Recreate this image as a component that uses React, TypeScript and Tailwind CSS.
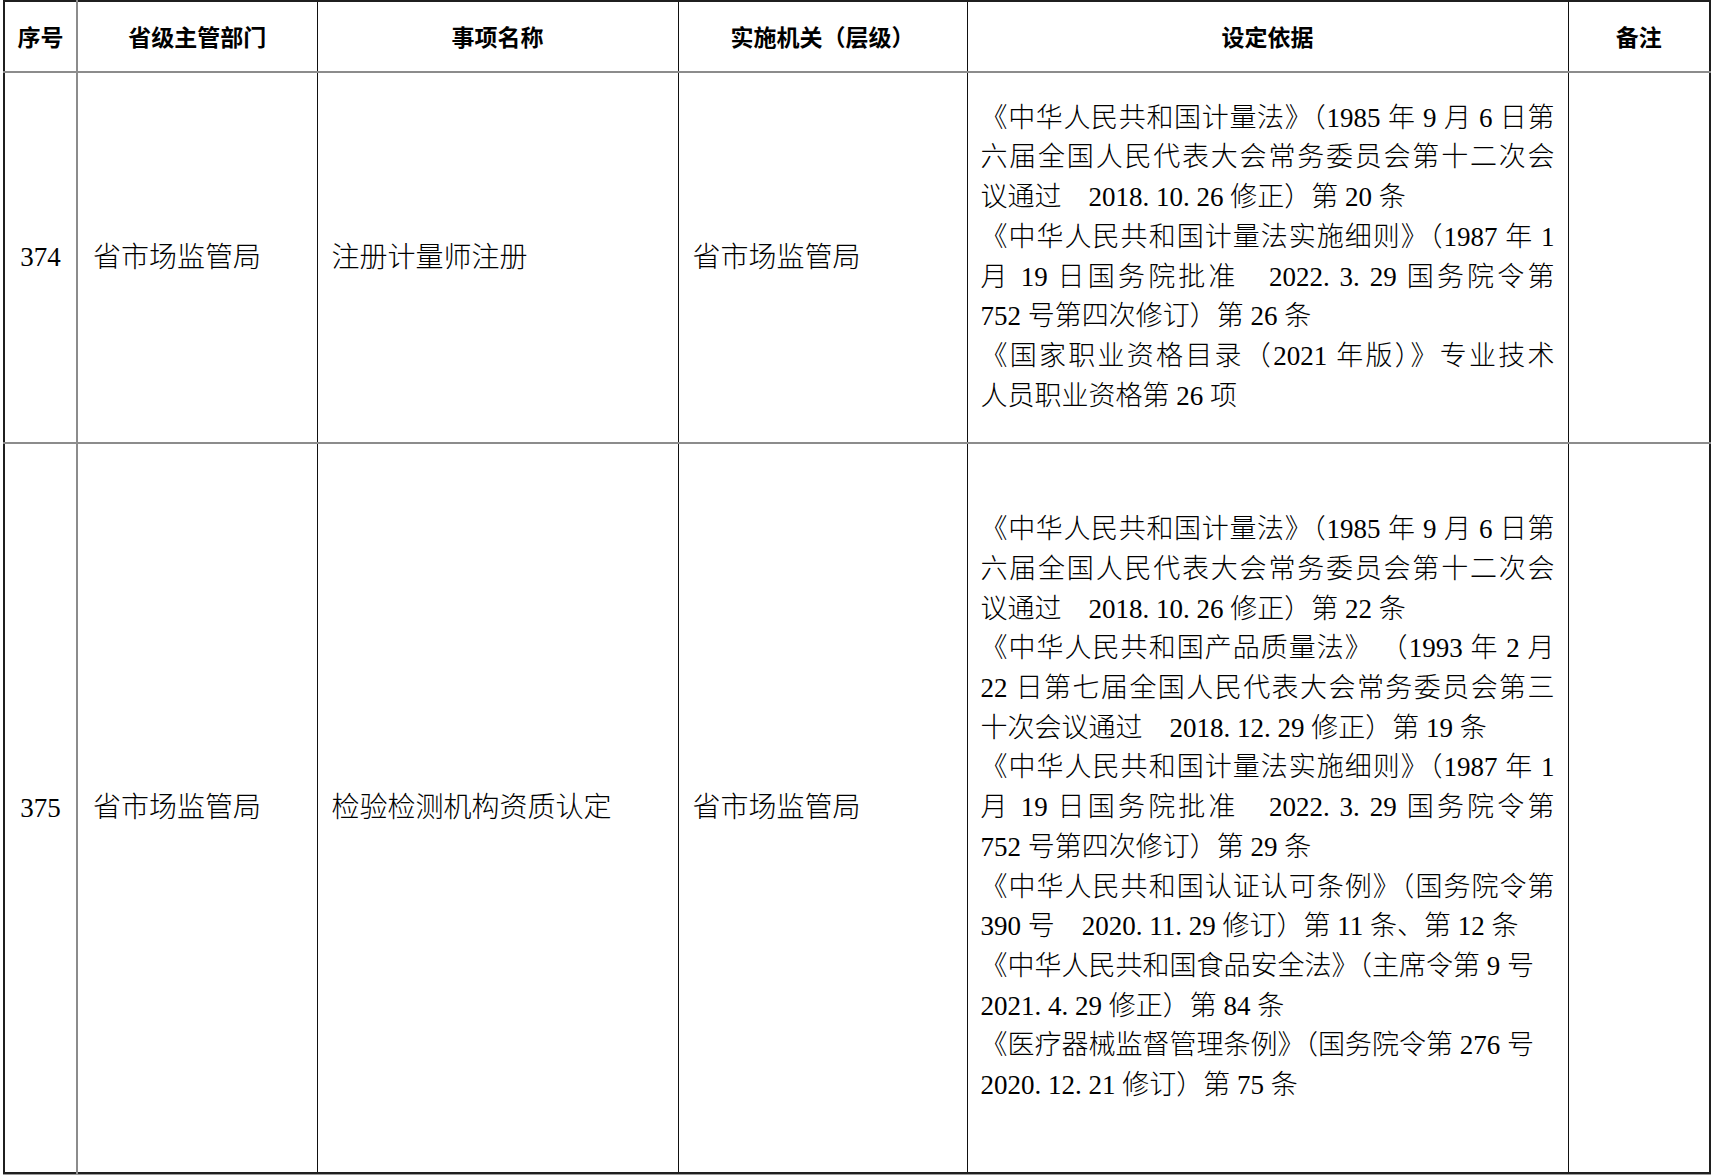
const serif = "font-['Liberation_Serif','Noto_Sans_CJK_SC',serif]";
const sans = "font-['Noto_Sans_CJK_SC','Liberation_Sans',sans-serif]";

type Line = [string, boolean];

const basis374: Line[] = [
  ["《中华人民共和国计量法》（1985 年 9 月 6 日第", true],
  ["六届全国人民代表大会常务委员会第十二次会", true],
  ["议通过　2018. 10. 26 修正）第 20 条", false],
  ["《中华人民共和国计量法实施细则》（1987 年 1", true],
  ["月 19 日国务院批准　2022. 3. 29 国务院令第", true],
  ["752 号第四次修订）第 26 条", false],
  ["《国家职业资格目录（2021 年版）》专业技术", true],
  ["人员职业资格第 26 项", false],
];

const basis375: Line[] = [
  ["《中华人民共和国计量法》（1985 年 9 月 6 日第", true],
  ["六届全国人民代表大会常务委员会第十二次会", true],
  ["议通过　2018. 10. 26 修正）第 22 条", false],
  ["《中华人民共和国产品质量法》 （1993 年 2 月", true],
  ["22 日第七届全国人民代表大会常务委员会第三", true],
  ["十次会议通过　2018. 12. 29 修正）第 19 条", false],
  ["《中华人民共和国计量法实施细则》（1987 年 1", true],
  ["月 19 日国务院批准　2022. 3. 29 国务院令第", true],
  ["752 号第四次修订）第 29 条", false],
  ["《中华人民共和国认证认可条例》（国务院令第", true],
  ["390 号　2020. 11. 29 修订）第 11 条、第 12 条", false],
  ["《中华人民共和国食品安全法》（主席令第 9 号", false],
  ["2021. 4. 29 修正）第 84 条", false],
  ["《医疗器械监督管理条例》（国务院令第 276 号", false],
  ["2020. 12. 21 修订）第 75 条", false],
];

function Basis({ lines }: { lines: Line[] }) {
  return (
    <div className="text-[27px] leading-[39.7px] font-light whitespace-nowrap">
      {lines.map(([text, justify], i) => (
        <div key={i} className={justify ? "text-justify [text-align-last:justify]" : ""}>
          {text}
        </div>
      ))}
    </div>
  );
}

const rows = [
  { no: "374", dept: "省市场监管局", item: "注册计量师注册", org: "省市场监管局", basis: basis374, h: "h-[371px]" },
  { no: "375", dept: "省市场监管局", item: "检验检测机构资质认定", org: "省市场监管局", basis: basis375, h: "h-[730px]" },
];

const headers = ["序号", "省级主管部门", "事项名称", "实施机关（层级）", "设定依据", "备注"];

export default function App() {
  return (
    <div className="min-h-[1175px] bg-white pl-[3px]">
      <table className={`table-fixed border-collapse w-[1706px] text-black ${serif} border-2 border-[#1f1f1f] shadow-[0_2px_0_#9a9a9a]`}>
        <colgroup>
          <col className="w-[73px]" />
          <col className="w-[240px]" />
          <col className="w-[361px]" />
          <col className="w-[289px]" />
          <col className="w-[601px]" />
          <col className="w-[142px]" />
        </colgroup>
        <thead>
          <tr className="h-[71px] border-b-2 border-[#8c8c8c]">
            {headers.map((h, i) => (
              <th
                key={h}
                className={`${sans} text-[23px] font-bold text-center align-middle ${
                  i === 0 ? "border-r-2 border-r-[#8c8c8c]" : "border-r border-r-[#111]"
                }`}
              >
                {h}
              </th>
            ))}
          </tr>
        </thead>
        <tbody>
          {rows.map((r) => (
            <tr key={r.no} className={`${r.h} border-b-2 border-[#8c8c8c] last:border-b-2 last:border-[#1f1f1f]`}>
              <td className="border-r-2 border-r-[#8c8c8c] text-center align-middle text-[27px] font-light">{r.no}</td>
              <td className="border-r border-r-[#111] pl-[15px] align-middle text-[28px] font-light whitespace-nowrap">{r.dept}</td>
              <td className="border-r border-r-[#111] pl-[14px] align-middle text-[28px] font-light whitespace-nowrap">{r.item}</td>
              <td className="border-r border-r-[#111] pl-[14px] align-middle text-[28px] font-light whitespace-nowrap">{r.org}</td>
              <td className="border-r border-r-[#111] pl-[13px] pr-[13px] align-middle">
                <Basis lines={r.basis} />
              </td>
              <td className="align-middle" />
            </tr>
          ))}
        </tbody>
      </table>
    </div>
  );
}
